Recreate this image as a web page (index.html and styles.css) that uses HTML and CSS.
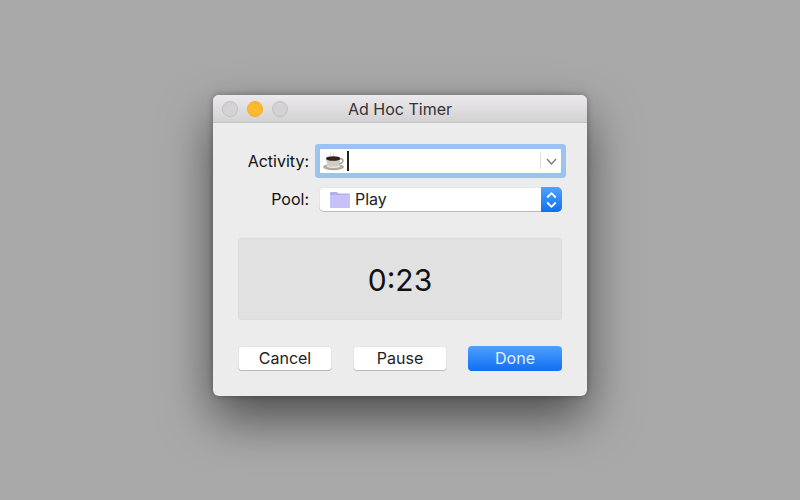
FILE: index.html
```html
<!doctype html>
<html>
<head>
    <meta charset="utf-8">
    <title>Ad Hoc Timer</title>
    <link rel="stylesheet" href="styles.css">
</head>
<body>
    <div class="window">
        <header class="titlebar">
            <div class="lights">
                <span class="light"></span>
                <span class="light light_min"></span>
                <span class="light"></span>
            </div>
            <div class="title">Ad Hoc Timer</div>
        </header>
        <section class="content">
            <div class="row row_activity">
                <label class="label">Activity:</label>
                <div class="combo">
                    <svg class="cup" width="22" height="19" viewBox="0 0 22 19">
                        <path d="M7.500 4c-1-1 1-2 0-3.500M10.500 4c-1-1 1-2 0-3.500" fill="none" stroke="#d4d4d4" stroke-width="0.900"/>
                        <ellipse cx="10.500" cy="15" rx="10.500" ry="3.300" fill="#aeaaa1"/>
                        <ellipse cx="10.500" cy="14.300" rx="7" ry="1.800" fill="#e6e4de"/>
                        <path d="M15.500 7h3.200c1.800 0 1.800 3.800-.7 4.200L14.500 12.500" fill="none" stroke="#a29d94" stroke-width="1.400"/>
                        <path d="M3 6h14.500c0 4.500-2 8-4 8.500h-6.500c-2-.5-4-4-4-8.500z" fill="#cfccc4"/>
                        <ellipse cx="10.200" cy="6.500" rx="7.200" ry="2.300" fill="#38201a"/>
                    </svg>
                    <span class="caret"></span>
                    <span class="combo_btn">
                        <svg width="11" height="7" viewBox="0 0 11 7"><path d="M1 1l4.500 5L10 1" fill="none" stroke="#777" stroke-width="1.200"/></svg>
                    </span>
                </div>
            </div>
            <div class="row row_pool">
                <label class="label">Pool:</label>
                <div class="popup">
                    <svg class="folder" width="20" height="16" viewBox="0 0 20 16">
                        <path d="M0 1.500C0 .5.500 0 1.500 0h5c1 0 1.500 1.500 2.500 1.500h9.500c1 0 1.500.5 1.500 1.500v3H0z" fill="#b4aeee"/>
                        <rect x="0" y="3" width="20" height="13" fill="#c6c1f7"/>
                    </svg>
                    <span class="popup_text">Play</span>
                    <span class="stepper">
                        <svg width="11" height="18" viewBox="0 0 11 18"><path d="M1.200 6.500l4.300-4.300 4.300 4.300M1.200 11.500l4.300 4.300 4.300-4.300" fill="none" stroke="#fff" stroke-width="1.800"/></svg>
                    </span>
                </div>
            </div>
            <div class="clock">0:23</div>
            <div class="buttons">
                <button class="btn">Cancel</button>
                <button class="btn">Pause</button>
                <button class="btn btn_done">Done</button>
            </div>
        </section>
    </div>
</body>
</html>
```

FILE: styles.css
```css
body{
    margin:0;
    height:500px;
    overflow:hidden;
    background-color:#a9a9a9;
    font-family:"Inter","Liberation Sans",sans-serif;
    color:#222;
}
.window{
    width:374px;
    height:301px;
    margin:95px 0 0 213px;
    border-radius:6px;
    overflow:hidden;
    background-color:#ececec;
    box-shadow:0 22px 50px rgba(0,0,0,0.55), 0 0 6px rgba(0,0,0,0.3);
}
.titlebar{
    display:flex;
    align-items:center;
    position:relative;
    height:27px;
    background:linear-gradient(#ebe9eb,#d3d1d3);
    border-bottom:1px solid #c4c4c4;
}
.lights{
    display:flex;
    gap:9px;
    padding-left:9px;
}
.light{
    width:14px;
    height:14px;
    border-radius:50%;
    background-color:#d4d2d4;
    border:1px solid #c2c0c2;
}
.light_min{
    background-color:#fdb92c;
    border-color:#f3ae22;
}
.title{
    position:absolute;
    left:0;
    right:0;
    text-align:center;
    font-size:16px;
    color:#333;
}
.content{
    display:flex;
    flex-direction:column;
    padding:26px 25px 0;
}
.row{
    display:flex;
    align-items:center;
}
.label{
    width:71px;
    text-align:right;
    font-size:16px;
    color:#111;
}
.row_pool .label{
    margin-bottom:2px;
}
.combo{
    display:flex;
    align-items:center;
    width:241px;
    height:24px;
    margin-left:11px;
    background-color:#fff;
    box-shadow:0 0 0 5px #9cc3ee;
    border-radius:1px;
}
.cup{
    margin-left:3px;
}
.caret{
    width:1.500px;
    height:20px;
    margin-left:2px;
    background-color:#222;
}
.combo_btn{
    display:flex;
    align-items:center;
    justify-content:center;
    margin-left:auto;
    width:20px;
    height:16px;
    border-left:1px solid #ddd;
}
.row_pool{
    margin-top:14px;
}
.popup{
    display:flex;
    align-items:center;
    width:243px;
    height:25px;
    margin-left:10px;
    background-color:#fff;
    border-radius:5px;
    box-shadow:inset 0 0 0 1px rgba(0,0,0,0.1), inset 0 -1px 0 rgba(0,0,0,0.18);
    overflow:hidden;
    font-size:16px;
}
.folder{
    margin-left:11px;
}
.popup_text{
    margin-left:5px;
    margin-top:-1px;
    color:#222;
}
.stepper{
    display:flex;
    align-items:center;
    justify-content:center;
    margin-left:auto;
    width:21px;
    height:25px;
    background:linear-gradient(#4fa3fb,#0f6ff0);
}
.clock{
    display:flex;
    align-items:center;
    justify-content:center;
    height:78px;
    margin-top:26px;
    padding-top:2px;
    background-color:#e1e1e1;
    border:1px solid #dcdcdc;
    border-radius:3px;
    font-size:30px;
    color:#111;
}
.buttons{
    display:flex;
    justify-content:space-between;
    margin-top:26px;
}
.btn{
    width:94px;
    height:25px;
    padding:0 0 2px;
    border:none;
    border-radius:4px;
    background-color:#fff;
    box-shadow:inset 0 0 0 1px rgba(0,0,0,0.1), inset 0 -1px 0 rgba(0,0,0,0.18);
    font-family:inherit;
    font-size:16px;
    color:#222;
}
.btn_done{
    background:linear-gradient(#4fa0fb,#0f6ff5);
    box-shadow:none;
    color:#e6f1ff;
}
```
